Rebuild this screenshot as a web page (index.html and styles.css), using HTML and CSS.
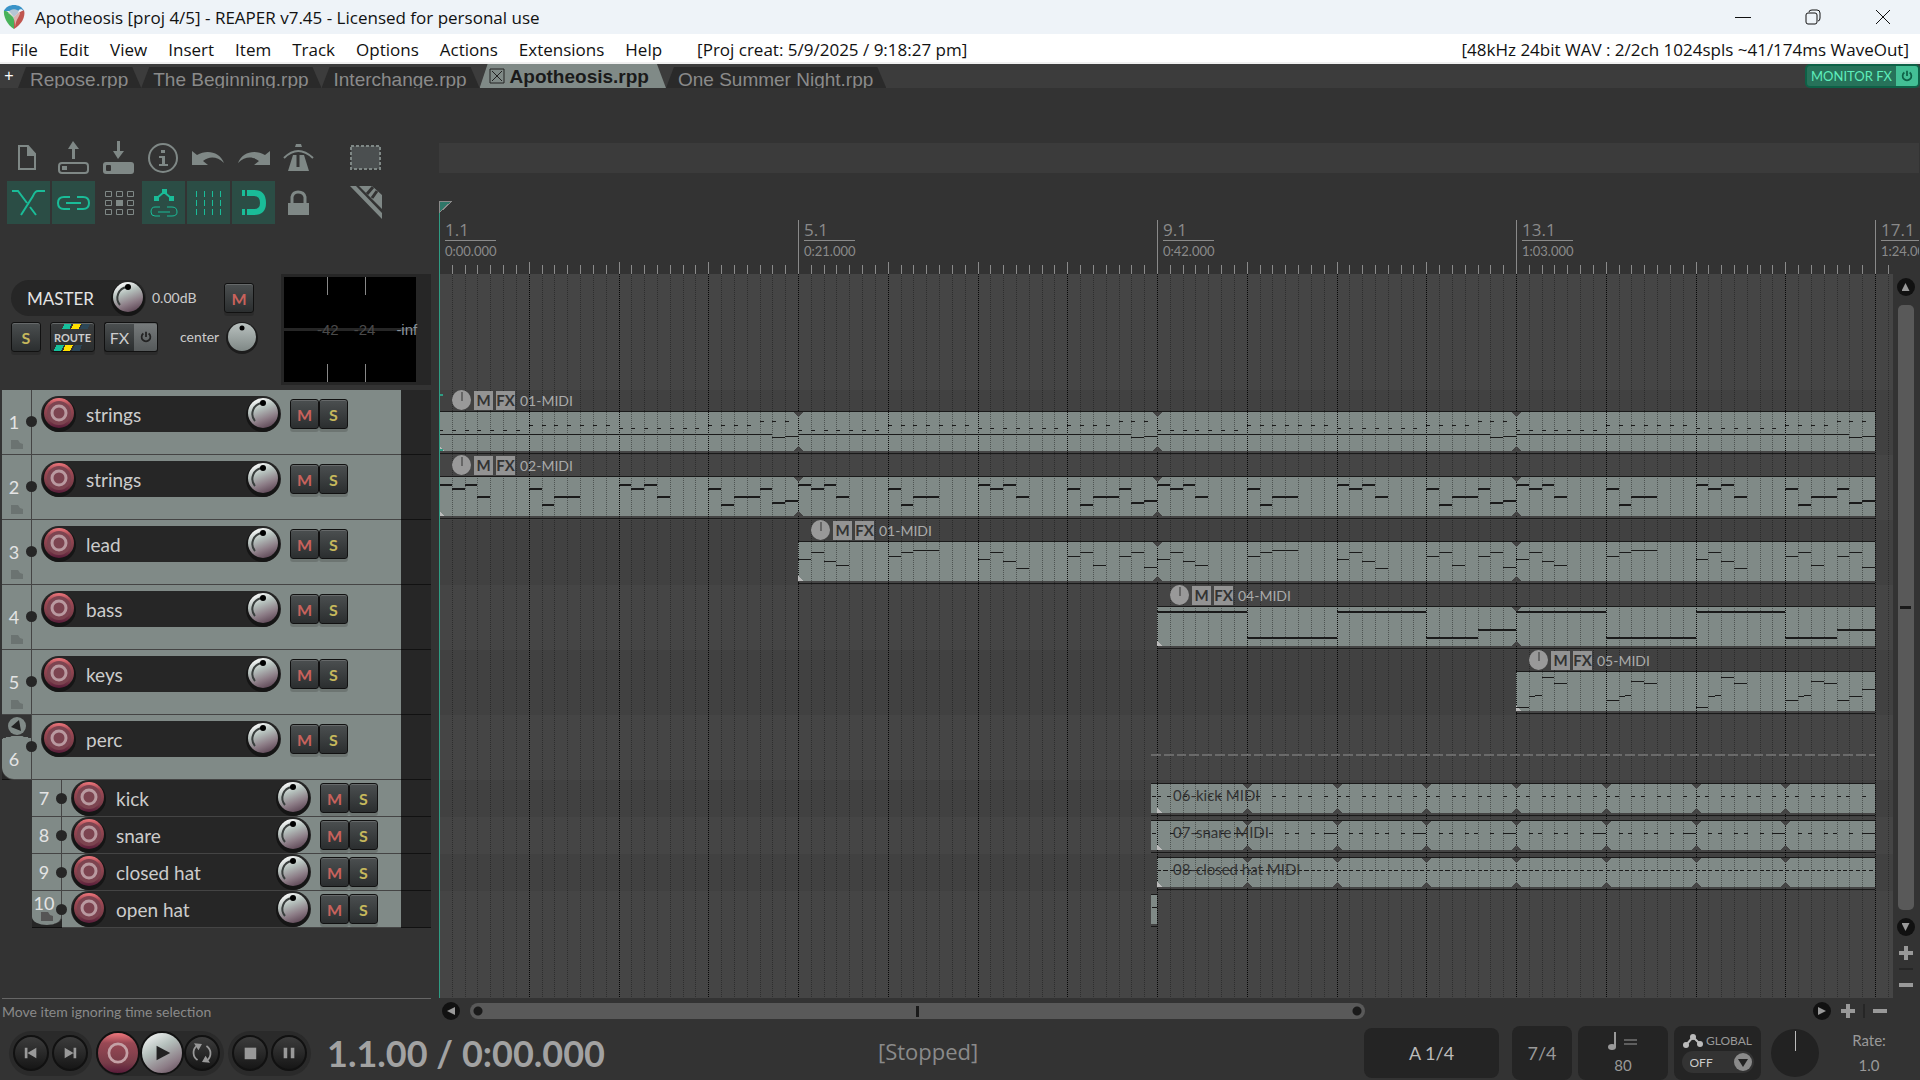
FILE: index.html
```html
<!DOCTYPE html>
<html lang="en">
  <head>
    <meta charset="UTF-8" />
    <meta name="viewport" content="width=device-width, initial-scale=1.0" />
    <title>Apotheosis [proj 4/5] - REAPER v7.45</title>
    <link rel="stylesheet" href="styles.css">
  </head>
  <body>
    <!-- Shared symbols -->
    <svg class="defs" width="0" height="0" aria-hidden="true">
      <defs>
        <linearGradient id="knobFill" x1="0.3" y1="0" x2="0.7" y2="1">
          <stop offset="0" stop-color="#fff" />
          <stop offset="0.35" stop-color="#b4bfbb" />
          <stop offset="0.7" stop-color="#8c7c86" />
          <stop offset="1" stop-color="#5d4655" />
        </linearGradient>
        <linearGradient id="panFill" x1="0" y1="0" x2="0" y2="1">
          <stop offset="0" stop-color="#b9c1bf" />
          <stop offset="1" stop-color="#7f8886" />
        </linearGradient>
        <linearGradient id="recFill" x1="0" y1="0" x2="0" y2="1">
          <stop offset="0" stop-color="#f0777c" />
          <stop offset="0.25" stop-color="#a04a55" />
          <stop offset="0.75" stop-color="#773c48" />
          <stop offset="1" stop-color="#5a1c3a" />
        </linearGradient>
        <symbol id="knob" viewBox="0 0 36 36">
          <circle cx="18" cy="19" r="17" fill="#151515" />
          <circle cx="18" cy="17" r="15" fill="url(#knobFill)" />
          <path d="M17 7 A11 11 0 0 0 10 25" fill="none" stroke="#3a3f3e" stroke-width="2" />
          <circle cx="18" cy="7" r="3" />
        </symbol>
        <symbol id="pan" viewBox="0 0 36 36">
          <circle cx="18" cy="19" r="16" fill="#1c1c1c" />
          <circle cx="18" cy="18" r="14" fill="url(#panFill)" />
          <circle cx="18" cy="9" r="2.5" />
        </symbol>
        <symbol id="rec" viewBox="0 0 36 36">
          <circle cx="18" cy="19" r="17" fill="#151515" />
          <circle cx="18" cy="17" r="15" fill="url(#recFill)" />
          <circle cx="18" cy="17" r="12" fill="#7c4450" />
          <circle cx="18" cy="17" r="7" fill="none" stroke="#b99aa0" stroke-width="3" />
        </symbol>
        <symbol id="power" viewBox="0 0 16 16">
          <path d="M5 4 a5 5 0 1 0 6 0 M8 2 v6" fill="none" stroke="currentColor" stroke-width="2" />
        </symbol>
        <symbol id="folder" viewBox="0 0 12 9">
          <path d="M0 0 H7 L9 3 L12 4 V9 H0 Z" fill="currentColor" />
        </symbol>
      </defs>
    </svg>

    <header class="titlebar">
      <svg class="logo" viewBox="0 0 24 24">
        <path d="M2 5 C1 11 5 20 12 24 V12 L6 7 Z" fill="#48b25a" />
        <path d="M22 5 C24 12 19 20 12 24 V12 L16 8 Z" fill="#c0554f" />
        <path d="M2 6 C5 -2 19 -2 22 6 C19 3 16 4 16 8 L12 12 L7 6 Z" fill="#3a93c8" />
        <path d="M6 8 C8 3 16 3 18 8 C18 11 14 14 13 22 C13 15 12 12 6 8 Z" fill="#e9dcd8" opacity="0.7" />
      </svg>
      <span class="title">Apotheosis [proj 4/5] - REAPER v7.45 - Licensed for personal use</span>
      <button class="win-btn" aria-label="Minimize"><svg viewBox="0 0 16 16"><path d="M0 8.500 H16" /></svg></button>
      <button class="win-btn" aria-label="Restore"><svg viewBox="0 0 16 16"><rect x="1" y="4" width="11" height="11" rx="2" /><path d="M4 3 Q4 1 7 1 H12 Q15 1 15 4 V9 Q15 12 13 12" /></svg></button>
      <button class="win-btn" aria-label="Close"><svg viewBox="0 0 16 16"><path d="M1 1 L15 15 M15 1 L1 15" /></svg></button>
    </header>

    <nav class="menubar">
      <button>File</button>
      <button>Edit</button>
      <button>View</button>
      <button>Insert</button>
      <button>Item</button>
      <button>Track</button>
      <button>Options</button>
      <button>Actions</button>
      <button>Extensions</button>
      <button>Help</button>
      <span class="created">[Proj creat: 5/9/2025 / 9:18:27 pm]</span>
      <span class="audio">[48kHz 24bit WAV : 2/2ch 1024spls ~41/174ms WaveOut]</span>
    </nav>

    <div class="tabbar">
      <button class="add-tab" aria-label="New project tab">+</button>
      <button class="tab">Repose.rpp</button>
      <button class="tab">The Beginning.rpp</button>
      <button class="tab">Interchange.rpp</button>
      <button class="tab active"><svg viewBox="0 0 16 16"><path d="M1 1 H15 V15 H1 Z M3 3 L13 13 M13 3 L3 13" /></svg>Apotheosis.rpp</button>
      <button class="tab">One Summer Night.rpp</button>
      <div class="monitor">
        <button class="monitor-fx">MONITOR FX</button>
        <button class="monitor-power" aria-label="Monitor FX power"><svg><use href="#power" /></svg></button>
      </div>
    </div>

    <main class="workspace">
      <aside class="sidebar">
        <div class="toolbar">
          <div class="tool-row">
            <button class="tool" aria-label="New project"><svg viewBox="0 0 43 43"><path d="M12 9 H21 L28 17 V32 H12 Z" class="line" /><path d="M20 8 L29 17 V19 H20 Z" /></svg></button>
            <button class="tool" aria-label="Open project"><svg viewBox="0 0 43 43"><rect x="7" y="26" width="29" height="10" rx="3" class="line" /><rect x="10" y="29" width="5" height="4" /><path d="M21 4 L27 12 H23 V22 H20 V12 H16 Z" /></svg></button>
            <button class="tool" aria-label="Save project"><svg viewBox="0 0 43 43"><rect x="6" y="25" width="31" height="12" rx="3" /><rect x="9" y="28" width="5" height="6" rx="1" class="cut" /><path d="M21 22 L27 14 H23 V4 H20 V14 H16 Z" /></svg></button>
            <button class="tool" aria-label="Project settings"><svg viewBox="0 0 43 43"><circle cx="21" cy="21" r="14" class="line" /><path d="M19 13 H23 V16 H19 Z M17 19 H23 V27 H26 V29 H17 V27 H20 V21 H17 Z" /></svg></button>
            <button class="tool" aria-label="Undo"><svg viewBox="0 0 43 43"><path d="M5 14 L10 18 C20 12 33 15 37 26 C30 19 22 19 16 24 L21 28 H5 Z" /></svg></button>
            <button class="tool" aria-label="Redo"><svg viewBox="0 0 43 43"><path d="M38 14 L33 18 C23 12 10 15 6 26 C13 19 21 19 27 24 L22 28 H38 Z" /></svg></button>
            <button class="tool" aria-label="Metronome"><svg viewBox="0 0 43 43"><path d="M16 18 H27 L32 34 H11 Z M19 7 H24 L25 10 H18 Z" /><path d="M7 21 Q21 7 36 21" class="line" /><path d="M21 18 V30" class="slot" /></svg></button>
            <button class="tool extra" aria-label="Marquee select"><svg viewBox="0 0 43 43"><rect x="7" y="9" width="29" height="23" fill="#4b4f50" stroke="#7f8886" stroke-width="2" stroke-dasharray="3 2" /></svg></button>
          </div>
          <div class="tool-row">
            <button class="tool on" aria-label="Auto crossfade"><svg viewBox="0 0 43 43"><path d="M5 10 H11 L20 22 M38 10 H31 Q28 10 26 15 L14 34 M23 26 L29 34" class="line" /></svg></button>
            <button class="tool on" aria-label="Item grouping"><svg viewBox="0 0 43 43"><path d="M18 16 H12 Q6 16 6 22 Q6 28 12 28 H18 M25 16 H31 Q37 16 37 22 Q37 28 31 28 H25 M14 22 H29" class="line" /></svg></button>
            <button class="tool" aria-label="Ripple editing"><svg viewBox="0 0 43 43"><path d="M8.500 10.500 H14.500 V15.500 H8.500 Z M19.500 10.500 H25.500 V15.500 H19.500 Z M30.500 10.500 H36.500 V15.500 H30.500 Z M8.500 19.500 H14.500 V24.500 H8.500 Z M30.500 19.500 H36.500 V24.500 H30.500 Z M8.500 28.500 H14.500 V33.500 H8.500 Z M19.500 28.500 H25.500 V33.500 H19.500 Z M30.500 28.500 H36.500 V33.500 H30.500 Z" class="thin" /><rect x="19" y="19" width="7" height="6" /></svg></button>
            <button class="tool on" aria-label="Move envelopes"><svg viewBox="0 0 43 43"><path d="M12 15 H17 V20 H12 Z M20 8 H25 V13 H20 Z M27 15 H32 V20 H27 Z" /><path d="M15 17 L22 11 L29 17" class="line" /><path d="M18 26 H13 Q9 26 9 31 Q9 35 13 35 H18 M25 26 H30 Q35 26 35 31 Q35 35 30 35 H25 M16 31 H28" class="line fine" /></svg></button>
            <button class="tool on" aria-label="Grid lines"><svg viewBox="0 0 43 43"><path d="M9.500 10 V34 M17.500 10 V34 M25.500 10 V34 M33.500 10 V34" class="line fine" stroke-dasharray="6 3" /></svg></button>
            <button class="tool on" aria-label="Snap"><svg viewBox="0 0 43 43"><path d="M15 12 H22 Q31 12 31 22 Q31 31 22 31 H15 M10 12 H13 M10 31 H13" class="thick" /></svg></button>
            <button class="tool" aria-label="Locking"><svg viewBox="0 0 43 43"><rect x="11" y="22" width="21" height="12" /><path d="M15 22 V16 Q16 11 21 11 Q27 11 28 16 V22" class="line bold" /></svg></button>
            <button class="tool extra" aria-label="Razor edit"><svg viewBox="0 0 43 43"><path d="M6 5 H12 L38 32 V38 Z M15 5 H28 L38 14 V28 Z" /><path d="M23 13 L29 6 M28 17 L33 10" class="slot" /></svg></button>
          </div>
        </div>

        <section class="master">
          <div class="master-controls">
            <div class="master-row">
              <div class="master-name">MASTER<svg class="knob"><use href="#knob" /></svg></div>
              <span class="volume">0.00dB</span>
              <button class="btn mute">M</button>
            </div>
            <div class="master-row">
              <button class="btn solo">S</button>
              <button class="btn route">ROUTE</button>
              <div class="fx-pair">
                <button class="btn fx">FX</button>
                <button class="btn fx-power" aria-label="Master FX power"><svg><use href="#power" /></svg></button>
              </div>
              <span class="pan-label">center</span>
              <svg class="knob pan"><use href="#pan" /></svg>
            </div>
          </div>
          <div class="meter">
            <div class="meter-scale">
              <span>-42</span><span>-24</span><span class="inf">-inf</span>
            </div>
          </div>
        </section>

        <div class="tracks" id="tracks"></div>
        <div class="status">Move item ignoring time selection</div>
      </aside>

      <section class="timeline">
        <div class="region-lane"></div>
        <div class="ruler" id="ruler"></div>
        <div class="arrange-row">
          <div class="arrange" id="arrange"></div>
          <div class="vscroll">
            <button class="arrow up" aria-label="Scroll up"></button>
            <div class="vthumb"></div>
            <button class="arrow down" aria-label="Scroll down"></button>
            <button class="zoom plus" aria-label="Zoom in vertically"></button>
            <i class="sep"></i>
            <button class="zoom" aria-label="Zoom out vertically"></button>
          </div>
        </div>
        <div class="hscroll">
          <button class="arrow left" aria-label="Scroll left"></button>
          <div class="htrack"><div class="hthumb"></div></div>
          <button class="arrow right" aria-label="Scroll right"></button>
          <button class="zoom plus" aria-label="Zoom in"></button>
          <i class="sep"></i>
          <button class="zoom" aria-label="Zoom out"></button>
        </div>
      </section>
    </main>

    <footer class="transport">
      <div class="pill">
        <button class="round" aria-label="Go to start"><svg viewBox="0 0 36 36"><path d="M11 12 H14 V24 H11 Z M24 12 V24 L14 18 Z" /></svg></button>
        <button class="round" aria-label="Go to end"><svg viewBox="0 0 36 36"><path d="M22 12 H25 V24 H22 Z M12 12 V24 L22 18 Z" /></svg></button>
      </div>
      <div class="pill middle">
        <button class="round big record" aria-label="Record"><svg viewBox="0 0 44 44"><circle cx="22" cy="22" r="10" fill="none" stroke="#c4a1a6" stroke-width="3" /></svg></button>
        <button class="round big play" aria-label="Play"><svg viewBox="0 0 44 44"><path d="M16 14 L31 22 L16 30 Z" fill="#222" /></svg></button>
        <button class="round" aria-label="Repeat"><svg viewBox="0 0 36 36"><path d="M13 26 A10 10 0 0 1 12 10 M23 10 A10 10 0 0 1 24 26" fill="none" stroke="#999" stroke-width="2" /><path d="M9 7 L18 8 L14 15 Z M27 29 L18 28 L22 21 Z" /></svg></button>
      </div>
      <div class="pill">
        <button class="round" aria-label="Stop"><svg viewBox="0 0 36 36"><rect x="12" y="12" width="13" height="13" /></svg></button>
        <button class="round" aria-label="Pause"><svg viewBox="0 0 36 36"><path d="M12 12 H16 V24 H12 Z M20 12 H24 V24 H20 Z" /></svg></button>
      </div>
      <div class="position">1.1.00 / 0:00.000</div>
      <div class="play-state">[Stopped]</div>
      <div class="box grid-box">A 1/4</div>
      <div class="box sig-box">7/4</div>
      <div class="box tempo-box">
        <svg viewBox="0 0 30 20"><path d="M7 0 V15" stroke="#999" stroke-width="2" /><ellipse cx="4" cy="15" rx="4" ry="3" fill="#999" /><path d="M16 8 H29 M16 12 H29" stroke="#999" stroke-width="1" /></svg>
        <span>80</span>
      </div>
      <div class="box global-box">
        <label for="automation"><svg viewBox="0 0 20 14"><path d="M3 11 L10 3 L17 10" fill="none" stroke="#bbb" stroke-width="2" /><circle cx="3" cy="11" r="3" /><circle cx="10" cy="3" r="3" /><circle cx="17" cy="10" r="3" /></svg>GLOBAL</label>
        <div class="select-wrap">
          <select id="automation"><option>OFF</option></select>
          <svg viewBox="0 0 18 18"><circle cx="9" cy="9" r="9" fill="#8a8a8a" /><path d="M4 6 H14 L9 14 Z" fill="#222" /></svg>
        </div>
      </div>
      <div class="rate-knob"></div>
      <div class="rate"><span>Rate:</span><span>1.0</span></div>
    </footer>

    <script src="script.js"></script>
  </body>
</html>
```
FILE: styles.css
```css
:root {
  --bg: #333;
  --dark: #262626;
  --track: #808a87;
  --muted: #8a8a8a;
  --teal: #1abc98;
  --teal-bg: #2b4d45;
}

* {
  box-sizing: border-box;
}

body {
  margin: 0;
  min-height: 100vh;
  display: flex;
  flex-direction: column;
  background: var(--bg);
  font-family: Lato, "Open Sans", sans-serif;
  color: #ccc;
  overflow: hidden;
}

button {
  font: inherit;
  color: inherit;
  background: none;
  border: none;
  padding: 0;
}

svg {
  display: block;
}

.defs {
  position: absolute;
}

/* Title and menu */
.titlebar {
  height: 34px;
  display: flex;
  align-items: center;
  padding: 0 2px;
  background: #eef3f8;
  color: #111;
  font: 17px "Open Sans", sans-serif;
}

.logo {
  width: 24px;
  height: 24px;
  margin-right: 9px;
}

.title {
  flex: 1;
}

.win-btn {
  width: 70px;
  height: 34px;
  display: flex;
  align-items: center;
  justify-content: center;
}

.win-btn svg {
  width: 16px;
  height: 16px;
  fill: none;
  stroke: #111;
}

.menubar {
  height: 30px;
  display: flex;
  align-items: center;
  gap: 21px;
  padding: 2px 11px 0;
  background: #fff;
  border-bottom: 2px solid #f0f0f0;
  color: #111;
  font: 17px "Open Sans", sans-serif;
  white-space: nowrap;
}

.created {
  margin-left: 14px;
}

.audio {
  margin-left: auto;
}

/* Project tabs */
.tabbar {
  height: 24px;
  display: flex;
  align-items: flex-end;
  background: #3c3c3c;
  font: 19px "Liberation Sans", sans-serif;
}

.add-tab {
  width: 18px;
  height: 24px;
  color: #fff;
  font-size: 16px;
}

.tab {
  height: 21px;
  padding: 0 13px 0 12px;
  display: flex;
  align-items: flex-start;
  overflow: hidden;
  line-height: 25px;
  color: var(--muted);
  background: #2a2a2a;
  clip-path: polygon(8px 0, calc(100% - 9px) 0, 100% 100%, 0 100%);
  white-space: nowrap;
}

.tab.active {
  height: 24px;
  padding: 0 17px 0 9px;
  align-items: center;
  gap: 5px;
  color: #1a1a1a;
  background: var(--track);
  font-weight: bold;
}

.tab svg {
  width: 16px;
  height: 16px;
  fill: none;
  stroke: #222;
}

.monitor {
  margin-left: auto;
  height: 24px;
  display: flex;
  align-items: stretch;
  border: 2px solid #0e6147;
  border-radius: 5px;
  overflow: hidden;
  background: #27725a;
  color: #5feebc;
  font: 13px Lato, sans-serif;
}

.monitor-fx {
  padding: 0 4px;
}

.monitor-power {
  width: 22px;
  display: flex;
  align-items: center;
  justify-content: center;
  background: #43bf95;
  color: #0e6147;
}

.monitor-power svg,
.fx-power svg {
  width: 14px;
  height: 14px;
}

/* Workspace */
.workspace {
  flex: 1;
  display: flex;
  min-height: 0;
}

.sidebar {
  width: 431px;
  margin-right: 8px;
  display: flex;
  flex-direction: column;
}

.toolbar {
  height: 186px;
  padding: 49px 0 0 7px;
}

.tool-row {
  display: flex;
  gap: 2px;
  margin-bottom: 1px;
}

.tool {
  width: 43px;
  height: 43px;
}

.tool svg {
  width: 43px;
  height: 43px;
  fill: #7f8886;
  stroke: none;
}

.tool.on {
  background: var(--teal-bg);
}

.tool.on svg {
  fill: var(--teal);
}

.tool .line,
.tool .thin,
.tool .thick {
  fill: none;
  stroke: #7f8886;
  stroke-width: 2;
}

.tool .thin,
.tool .fine {
  stroke-width: 1;
}

.tool .bold {
  stroke-width: 3;
}

.tool.on .line,
.tool.on .thick {
  stroke: var(--teal);
}

.tool .thick {
  stroke-width: 6;
}

.tool .cut {
  fill: var(--bg);
}

.tool .slot {
  stroke: var(--bg);
  stroke-width: 3;
}

.tool.extra {
  margin-left: 22px;
}

/* Shared buttons and knobs */
.btn {
  width: 30px;
  height: 30px;
  border: 1px solid #111;
  border-radius: 3px;
  background: linear-gradient(#4b4f50, #2b2e2f);
  box-shadow: inset 0 1px #66696a, 0 3px rgba(0, 0, 0, 0.15);
  font-size: 16px;
  font-weight: bold;
}

.mute {
  color: #c8625c;
}

.solo {
  color: #c6b85c;
}

.knob {
  width: 36px;
  height: 36px;
}

/* Master */
.master {
  height: 116px;
  display: flex;
  justify-content: space-between;
  align-items: flex-start;
}

.master-controls {
  width: 260px;
  padding: 6px 0 0 11px;
}

.master-row {
  height: 39px;
  display: flex;
  align-items: flex-start;
}

.master-row > .btn {
  margin-top: 3px;
}

.master-name {
  width: 135px;
  height: 36px;
  display: flex;
  align-items: center;
  justify-content: space-between;
  padding-left: 16px;
  border-radius: 18px;
  background: var(--dark);
  font-size: 17px;
  color: #e4e4e4;
}

.volume {
  width: 72px;
  margin-left: 6px;
  font-size: 14px;
  line-height: 36px;
}

.master-row .route {
  width: 45px;
  margin-left: 9px;
  font-size: 11px;
  background: linear-gradient(115deg, transparent 30%, #16c09c 30% 46%, #333 46% 50%, #ffe000 50% 66%, #333 66% 70%, #2c4757 70% 86%, transparent 86%) top / 100% 6px no-repeat,
    linear-gradient(115deg, transparent 12%, #16c09c 12% 28%, #333 28% 32%, #ffe000 32% 48%, #333 48% 52%, #2c4757 52% 68%, transparent 68%) bottom / 100% 6px no-repeat, linear-gradient(#3a3d3e, #2b2e2f);
}

.fx-pair {
  display: flex;
  margin: 3px 22px 0 9px;
}

.fx {
  border-right: none;
  border-radius: 3px 0 0 3px;
  font-weight: normal;
}

.fx-power {
  width: 24px;
  display: flex;
  align-items: center;
  justify-content: center;
  border-left: none;
  border-radius: 0 3px 3px 0;
  background: linear-gradient(#777b7c, #55595a);
  color: #222;
}

.pan-label {
  width: 44px;
  font-size: 14px;
  line-height: 36px;
}

.meter {
  width: 150px;
  height: 111px;
  padding: 3px 15px 3px 3px;
  background: var(--dark);
}

.meter-scale {
  height: 105px;
  display: flex;
  align-items: center;
  padding-left: 33px;
  gap: 15px;
  white-space: nowrap;
  color: #4a4a4a;
  font: 15px "Liberation Sans", sans-serif;
  background: linear-gradient(#888, #888) 43px 0 / 1px 18px no-repeat, linear-gradient(#888, #888) 81px 0 / 1px 18px no-repeat,
    linear-gradient(#888, #888) 43px 100% / 1px 18px no-repeat, linear-gradient(#888, #888) 81px 100% / 1px 18px no-repeat,
    linear-gradient(var(--dark), var(--dark)) 0 50% / 100% 3px no-repeat, #000;
}

.meter .inf {
  margin-left: 6px;
  color: #8a949c;
}

/* Track panel */
.tracks {
  flex: 1;
  padding-left: 2px;
}

.track {
  height: 65px;
  display: flex;
  padding-right: 30px;
  background: var(--dark);
  border-bottom: 1px solid #111;
}

.track.child {
  height: 37px;
  margin-left: 30px;
}

.track-num {
  position: relative;
  width: 30px;
  display: flex;
  flex-direction: column;
  align-items: center;
  padding: 20px 5px 0 0;
  background: var(--track);
  border-right: 1px solid #444;
  box-shadow: 0 1px #444;
  font-size: 18px;
  line-height: 24px;
  color: #e4e4e4;
}

.child .track-num {
  padding-top: 6px;
}

.track-num::after {
  content: "";
  position: absolute;
  right: -6px;
  top: 26px;
  width: 11px;
  height: 11px;
  border-radius: 50%;
  background: var(--dark);
}

.child .track-num::after {
  top: 13px;
}

.track-num svg {
  width: 12px;
  height: 9px;
  margin: 6px 0 0 5px;
  color: #6b7371;
}

.track.folder .track-num {
  padding-top: 2px;
  background: radial-gradient(ellipse 22px 10px at 15px 31px, var(--track) 98%, transparent) 0 0 / 100% 31px no-repeat, linear-gradient(var(--track), var(--track)) 0 30px / 100% 40px no-repeat, var(--bg);
  border-radius: 0 0 0 12px;
}

.fold-btn {
  width: 18px;
  height: 18px;
  margin: 0 0 12px 5px;
  border-radius: 50%;
  background: var(--track);
}

.fold-btn svg {
  width: 18px;
  height: 18px;
  margin: 0;
}

.track.last .track-num {
  height: 34px;
  padding-top: 0;
  border-radius: 0 0 50% 50% / 0 0 8px 8px;
  box-shadow: none;
}

.track.last .track-num svg {
  margin-top: -3px;
  color: #555;
}

.track-body {
  flex: 1;
  display: flex;
  align-items: flex-start;
  padding: 6px 0 0 9px;
  background: var(--track);
  box-shadow: 0 1px #444;
}

.child .track-body {
  padding-top: 0;
}

.track-name {
  width: 240px;
  height: 36px;
  display: flex;
  align-items: center;
  border-radius: 18px;
  background: var(--dark);
  font-size: 19px;
}

.track-name span {
  flex: 1;
  padding-left: 9px;
}

.track-body .btn {
  width: 29px;
  margin-top: 3px;
}

.track-body .mute {
  margin-left: 9px;
}

.status {
  height: 26px;
  margin-left: 2px;
  border-top: 1px solid #666;
  font-size: 14px;
  line-height: 25px;
  color: var(--muted);
}

/* Timeline */
.timeline {
  flex: 1;
  min-width: 0;
  display: flex;
  flex-direction: column;
}

.region-lane {
  height: 30px;
  margin: 55px 1px 0 0;
  background: #3b3b3b;
}

.ruler {
  position: relative;
  height: 101px;
  margin-right: 1px;
  overflow: hidden;
}

.ruler svg,
.arrange svg {
  width: 100%;
  height: 100%;
}

.bar-label {
  position: absolute;
  top: 47px;
  width: 51px;
  color: var(--muted);
  font: 17px/20px "Open Sans", sans-serif;
}

.bar-label small {
  display: block;
  border-top: 1px solid var(--muted);
  font: 13px/20px Lato, sans-serif;
}

.arrange-row {
  flex: 1;
  display: flex;
}

.arrange {
  position: relative;
  flex: 1;
  overflow: hidden;
  background: #454545;
}

.arrange > svg {
  position: absolute;
}

.item-head {
  position: absolute;
  height: 20px;
  display: flex;
  align-items: center;
  gap: 3px;
  color: #aaa;
  font-size: 14px;
}

.item-head i {
  width: 19px;
  height: 20px;
  border-radius: 50%;
  background: linear-gradient(#666, #666) 9px 2px / 2px 9px no-repeat, #999;
}

.item-head button {
  width: 19px;
  height: 19px;
  background: #939393;
  color: #333;
  font-size: 15px;
  font-weight: bold;
  line-height: 19px;
}

.item-head span {
  margin-left: 2px;
}

.item-name {
  position: absolute;
  font-size: 15px;
  line-height: 18px;
  color: #333;
}

/* Scrollbars */
.vscroll {
  width: 27px;
  display: flex;
  flex-direction: column;
  align-items: center;
  padding: 4px 2px 6px 0;
}

.arrow {
  width: 18px;
  height: 18px;
  border-radius: 50%;
  background: #111;
  display: flex;
  align-items: center;
  justify-content: center;
}

.arrow::before {
  content: "";
  width: 8px;
  height: 8px;
  background: #999;
  clip-path: polygon(0 0, 100% 0, 50% 100%);
}

.arrow.up::before {
  clip-path: polygon(50% 0, 100% 100%, 0 100%);
}

.arrow.left::before {
  clip-path: polygon(0 50%, 100% 0, 100% 100%);
}

.arrow.right::before {
  clip-path: polygon(0 0, 100% 50%, 0 100%);
}

.vthumb {
  flex: 1;
  width: 16px;
  margin: 9px 0 8px;
  border-radius: 5px;
  background: linear-gradient(#1a1a1a, #1a1a1a) 50% 50% / 11px 3px no-repeat, #595959;
}

.zoom {
  width: 14px;
  height: 14px;
  background: linear-gradient(#999, #999) 0 50% / 100% 4px no-repeat;
}

.zoom.plus {
  background: linear-gradient(#999, #999) 0 50% / 100% 4px no-repeat, linear-gradient(#999, #999) 50% 0 / 4px 100% no-repeat;
}

.vscroll .plus {
  margin-top: 10px;
}

.vscroll .sep {
  width: 14px;
  height: 2px;
  margin: 8px 0;
  background: #262626;
}

.hscroll {
  height: 26px;
  display: flex;
  align-items: center;
  padding: 0 33px 0 3px;
}

.htrack {
  flex: 1;
  margin: 0 7px 0 10px;
}

.hthumb {
  width: 67%;
  height: 16px;
  border-radius: 8px;
  background: radial-gradient(circle at 8px 8px, #1a1a1a 4px, transparent 5px), radial-gradient(circle at calc(100% - 8px) 8px, #1a1a1a 4px, transparent 5px),
    linear-gradient(#1a1a1a, #1a1a1a) 50% 50% / 3px 11px no-repeat, #595959;
}

.hscroll .plus {
  margin-left: 10px;
}

.hscroll .sep {
  width: 2px;
  height: 14px;
  margin: 0 8px;
  background: #262626;
}

/* Transport */
.transport {
  height: 56px;
  display: flex;
  align-items: center;
  padding: 2px 13px 0 9px;
}

.pill {
  height: 45px;
  display: flex;
  align-items: center;
  gap: 3px;
  padding: 0 4px;
  margin-right: 4px;
  border-radius: 23px;
  background: #2a2a2a;
}

.pill.middle {
  padding: 0 4px 0 0;
  gap: 0;
}

.round {
  width: 36px;
  height: 36px;
  border: 2px solid #111;
  border-radius: 50%;
  background: linear-gradient(#3c3c3c, #161616);
}

.round svg {
  width: 32px;
  height: 32px;
  fill: #999;
}

.round.big {
  width: 44px;
  height: 44px;
}

.round.big svg {
  width: 40px;
  height: 40px;
}

.round.record {
  background: linear-gradient(#f0777c, #984854 25%, #773c48 75%, #5a1c3a);
}

.round.play {
  background: linear-gradient(150deg, #fff, #b4bfbb 40%, #8c7c86 75%, #5d4655);
}

.position {
  width: 340px;
  margin-left: 12px;
  color: #a2a2a2;
  font-size: 36px;
  font-weight: bold;
  line-height: 44px;
  white-space: nowrap;
}

.play-state {
  flex: 1;
  padding: 0 0 4px 211px;
  font: 22px "Open Sans", sans-serif;
  color: var(--muted);
}

.box {
  height: 54px;
  display: flex;
  flex-direction: column;
  align-items: center;
  justify-content: center;
  margin-right: 6px;
  border-radius: 8px;
  background: #242424;
  color: #999;
  font-size: 18px;
}

.grid-box {
  width: 135px;
  height: 50px;
  margin-right: 13px;
  color: #bbb;
}

.sig-box {
  width: 60px;
}

.tempo-box {
  width: 90px;
  gap: 4px;
  font-size: 15px;
}

.tempo-box svg {
  width: 30px;
  height: 20px;
}

.global-box {
  width: 87px;
  gap: 3px;
  font-size: 12px;
}

.global-box label {
  display: flex;
  align-items: center;
  gap: 3px;
}

.global-box label svg {
  width: 20px;
  height: 14px;
  fill: #bbb;
}

.select-wrap {
  position: relative;
  width: 72px;
}

.select-wrap select {
  width: 72px;
  height: 22px;
  padding-left: 8px;
  appearance: none;
  border: none;
  border-radius: 11px;
  background: #333;
  color: #ccc;
  font: 12px Lato, sans-serif;
}

.select-wrap svg {
  position: absolute;
  right: 2px;
  top: 2px;
  width: 18px;
  height: 18px;
  pointer-events: none;
}

.rate-knob {
  width: 48px;
  height: 48px;
  margin-left: 4px;
  border-radius: 50%;
  background: linear-gradient(#bbb, #bbb) 50% 2px / 1px 20px no-repeat, #222;
}

.rate {
  width: 76px;
  margin-left: 12px;
  display: flex;
  flex-direction: column;
  align-items: center;
  font-size: 15px;
  line-height: 25px;
  color: #999;
}
```
FILE: script.js
```js
const BEATS = 7;
const BEAT = 359 / 28;
const beatX = (b) => Math.round(b * BEAT);

// Track panel
const trackNames = ["strings", "strings", "lead", "bass", "keys", "perc", "kick", "snare", "closed hat", "open hat"];
const folderIcon = '<svg><use href="#folder" /></svg>';
const foldButton = '<button class="fold-btn" aria-label="Collapse folder"><svg viewBox="0 0 18 18"><path d="M3 10 L11 3 L13 14 Z" fill="#222" /></svg></button>';

document.getElementById("tracks").innerHTML = trackNames
  .map((name, i) => {
    let cls = "track";
    if (i === 5) cls += " folder";
    if (i > 5) cls += " child";
    if (i === 9) cls += " last";
    const icon = i < 5 || i === 9 ? folderIcon : "";
    return `<div class="${cls}">
      <div class="track-num">${i === 5 ? foldButton : ""}${i + 1}${icon}</div>
      <div class="track-body">
        <div class="track-name"><svg class="knob"><use href="#rec" /></svg><span>${name}</span><svg class="knob"><use href="#knob" /></svg></div>
        <button class="btn mute">M</button><button class="btn solo">S</button>
      </div>
    </div>`;
  })
  .join("");

const rect = (x, y, w, h, fill) => `<rect x="${x}" y="${y}" width="${w}" height="${h}" fill="${fill}" />`;

// Ruler
let ruler = "";
for (let b = 1; b <= 113; b++) {
  const top = b % 28 === 0 ? 47 : b % BEATS === 0 ? 89 : 92;
  ruler += rect(beatX(b), top, 1, 101 - top, "#8a8a8a");
}
ruler += rect(0, 28, 1, 73, "#2f9c83");
ruler += '<path d="M0 28 H13 L0 40 Z" fill="#2f7668" stroke="#8a8a8a" />';
const labels = [["1.1", "0:00.000"], ["5.1", "0:21.000"], ["9.1", "0:42.000"], ["13.1", "1:03.000"], ["17.1", "1:24.000"]];
document.getElementById("ruler").innerHTML =
  `<svg shape-rendering="crispEdges">${ruler}</svg>` +
  labels.map(([bar, time], i) => `<div class="bar-label" style="left:${beatX(i * 28) + 6}px">${bar}<small>${time}</small></div>`).join("");

// Notes are [beat, length, y inside lane]
const run = (start, ys, len = 1) => ys.map((y, i) => [start + i, len, y]);
const strings1 = [
  ...run(0, Array(7).fill(40), 0.3), ...run(7, Array(7).fill(35), 0.3), ...run(14, Array(7).fill(38), 0.3),
  ...run(21, [35, 35, 35, 35, 31, 31, 31], 0.3), [0, 26, 44], [26, 1, 47], [27, 1, 46],
];
const strings2 = [
  ...run(0, [29, 33, 29, 41]), ...run(7, [33, 49]), [9, 2, 41],
  ...run(14, [29, 33, 29, 41]), ...run(21, [33, 49]), [23, 2, 41], ...run(25, [33, 47, 45]),
];
const lead = [
  ...run(0, [39, 32, 41, 45]), ...run(7, [36, 32]), [9, 2, 30],
  ...run(14, [39, 32, 41, 48]), ...run(21, [36, 32, 45]), ...run(25, [36, 32, 47]),
];
const bass = [[0, 7, 26], [7, 7, 52], [14, 7, 26], [21, 4, 52], [25, 3, 44]];
const keysBar = (s, a, b) => [[s, 1, a], [s + 1, 0.5, 46], [s + 1.5, 0.5, 45], [s + 2, 1, b], [s + 3, 1, 33]];
const keys = [...keysBar(0, 57, 27), ...keysBar(7, 50, 31), ...keysBar(14, 57, 27), ...keysBar(21, 50, 31), ...run(25, [50, 46, 39])];
const kick = [0, 0.75, 2, 2.75, 4, 4.75, 6].map((b) => [b, 0.3, 16]);
const snare = [...[1, 1.75, 3, 3.75, 5].map((b) => [b, 0.3, 16]), [6, 1, 16]];
const hat = Array.from({ length: 14 }, (_, i) => [i / 2, 0.32, 16]);

// start and loop in beats, y is the lane top
const items = [
  { name: "01-MIDI", start: 0, y: 116, notes: strings1, loop: 28, thick: 1 },
  { name: "02-MIDI", start: 0, y: 181, notes: strings2, loop: 28, thick: 2 },
  { name: "01-MIDI", start: 28, y: 246, notes: lead, loop: 28, thick: 1 },
  { name: "04-MIDI", start: 56, y: 311, notes: bass, loop: 28, thick: 2 },
  { name: "05-MIDI", start: 84, y: 376, notes: keys, loop: 28, thick: 1 },
  { name: "06-kick MIDI", start: 56, y: 506, notes: kick, loop: 7, thick: 1, drum: true, pre: 6 },
  { name: "07-snare MIDI", start: 56, y: 543, notes: snare, loop: 7, thick: 1, drum: true, pre: 6 },
  { name: "08-closed hat MIDI", start: 56, y: 580, notes: hat, loop: 7, thick: 1, drum: true },
];

const END = 112;
let back = "";
let grid = "";
let front = "";
let heads = "";

for (const y of [116, 246, 376, 506, 580]) back += rect(0, y, "100%", y > 500 ? 37 : 65, "#414141");

function drawBlock(x, y, w, h) {
  back += rect(x, y - 1, w, 1, "#1a1a1a") + rect(x, y, w, h, "#808a87");
  back += rect(x, y + h, w, 2, "#444") + rect(x, y + h + 2, w, 1, "#1a1a1a");
}

for (const it of items) {
  const x = beatX(it.start);
  const pre = it.pre || 0;
  const top = it.y + (it.drum ? 4 : 22);
  const h = it.drum ? 29 : 39;
  drawBlock(x - pre, top, beatX(END) - x + pre, h);
  front += `<path d="M${x} ${top + h - 5} L${x + 5} ${top + h} H${x} Z" fill="#bbb" />`;
  if (pre) front += rect(x - pre + 1, it.y + 16, 4, 1, "#1a1a1a");
  for (let s = it.start; s < END; s += it.loop) {
    if (s > it.start) {
      const m = beatX(s);
      front += `<path d="M${m - 5} ${top} H${m + 6} L${m + 0.5} ${top + 5} Z M${m - 5} ${top + h} H${m + 6} L${m + 0.5} ${top + h - 5} Z" fill="#444" />`;
    }
    for (const [b, len, y] of it.notes) {
      const nx = beatX(s + b);
      front += rect(nx, it.y + y, Math.max(4, Math.round((s + b + len) * BEAT) - nx), it.thick, "#1a1a1a");
    }
  }
  heads += it.drum
    ? `<div class="item-name" style="left:${x + 16}px;top:${it.y + 6}px">${it.name}</div>`
    : `<div class="item-head" style="left:${x + 13}px;top:${it.y}px"><i></i><button>M</button><button class="item-fx">FX</button><span>${it.name}</span></div>`;
}

// Open hat stub and the folder summary line
drawBlock(beatX(56) - 6, 621, 6, 29);
front += rect(beatX(56) - 5, 633, 5, 1, "#1a1a1a");
front += `<path d="M${beatX(56) - 6} 481 H${beatX(END)}" stroke="#6a6a6a" stroke-width="2" stroke-dasharray="${BEAT - 3} 3" />`;

for (let b = 1; b <= 113; b++) {
  const bar = b % BEATS === 0;
  const x = beatX(b) + 0.5;
  grid += `<line x1="${x}" x2="${x}" y1="0" y2="100%" stroke="${bar ? "#000" : "#111"}" stroke-opacity="${bar ? 0.9 : 0.45}" stroke-dasharray="1 1" />`;
}
front += rect(0, 0, 1, "100%", "#2f9c83") + rect(0, 120, 4, 2, "#2f9c83") + rect(0, 175, 4, 2, "#2f9c83");

document.getElementById("arrange").innerHTML = `<svg shape-rendering="crispEdges">${back}${grid}${front}</svg>${heads}`;
```
